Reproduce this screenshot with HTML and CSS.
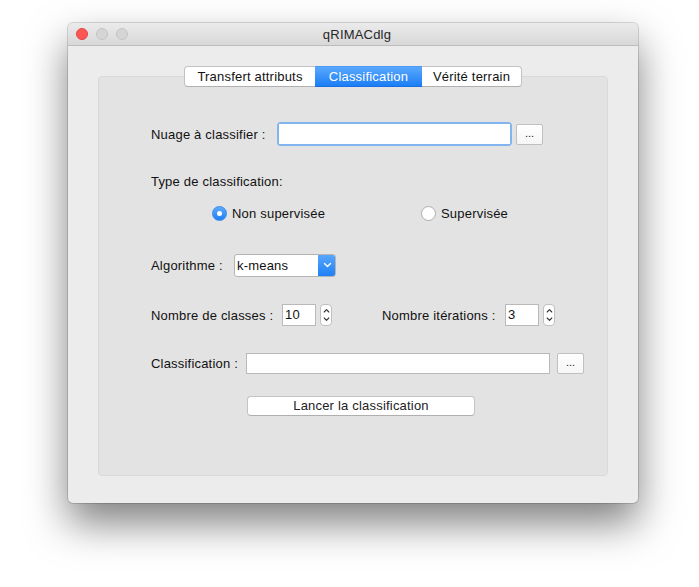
FILE: index.html
```html
<!DOCTYPE html>
<html>
<head>
<meta charset="utf-8">
<link rel="stylesheet" href="styles.css">
</head>
<body>
<div class="window">
  <div class="titlebar">
    <div class="lights">
      <span class="light red"></span>
      <span class="light gray"></span>
      <span class="light gray"></span>
    </div>
    <div class="title">qRIMACdlg</div>
  </div>
  <div class="tabs">
    <div class="tab first">Transfert attributs</div>
    <div class="tab active">Classification</div>
    <div class="tab last">Vérité terrain</div>
  </div>
  <div class="panel">
    <div class="row r1">
      <span class="label w-nuage">Nuage à classifier :</span>
      <div class="focus"><div class="field f-nuage"></div></div>
      <div class="btn dots">...</div>
    </div>
    <div class="row r2">
      <span class="label">Type de classification:</span>
    </div>
    <div class="row r3">
      <div class="radio-item ri1">
        <span class="radio checked"><span class="dot"></span></span>
        <span class="label">Non supervisée</span>
      </div>
      <div class="radio-item ri2">
        <span class="radio"></span>
        <span class="label">Supervisée</span>
      </div>
    </div>
    <div class="row r4">
      <span class="label w-algo">Algorithme :</span>
      <div class="combo">
        <span class="combo-text">k-means</span>
        <span class="combo-btn">
          <svg width="9" height="6" viewBox="0 0 9 6"><path d="M1.5 1.5 L4.5 4.5 L7.5 1.5" fill="none" stroke="#fff" stroke-width="1.4" stroke-linecap="round" stroke-linejoin="round"/></svg>
        </span>
      </div>
    </div>
    <div class="row r5">
      <span class="label w-classes">Nombre de classes :</span>
      <div class="spin-field">10</div>
      <div class="spinner">
        <svg width="9" height="20" viewBox="0 0 9 20"><path d="M2.2 7 L4.5 4.6 L6.8 7" fill="none" stroke="#333" stroke-width="1.1" stroke-linecap="round" stroke-linejoin="round"/><path d="M2.2 13 L4.5 15.4 L6.8 13" fill="none" stroke="#333" stroke-width="1.1" stroke-linecap="round" stroke-linejoin="round"/></svg>
      </div>
      <span class="label w-iter">Nombre itérations :</span>
      <div class="spin-field">3</div>
      <div class="spinner">
        <svg width="9" height="20" viewBox="0 0 9 20"><path d="M2.2 7 L4.5 4.6 L6.8 7" fill="none" stroke="#333" stroke-width="1.1" stroke-linecap="round" stroke-linejoin="round"/><path d="M2.2 13 L4.5 15.4 L6.8 13" fill="none" stroke="#333" stroke-width="1.1" stroke-linecap="round" stroke-linejoin="round"/></svg>
      </div>
    </div>
    <div class="row r6">
      <span class="label w-class">Classification :</span>
      <div class="field f-class"></div>
      <div class="btn dots dots2">...</div>
    </div>
    <div class="row r7">
      <div class="btn launch">Lancer la classification</div>
    </div>
  </div>
</div>
</body>
</html>
```

FILE: styles.css
```css
html, body {
  margin: 0;
  padding: 0;
  background: #ffffff;
}
body {
  width: 699px;
  height: 587px;
  overflow: hidden;
  font-family: "Liberation Sans", Arial, sans-serif;
  font-size: 13px;
  letter-spacing: 0.2px;
  color: #111;
}
.window {
  margin-left: 68px;
  margin-top: 23px;
  width: 570px;
  height: 480px;
  background: #ececec;
  border-radius: 5px;
  box-shadow: 0 0 0 1px rgba(0,0,0,0.14), 0 20px 40px rgba(0,0,0,0.5);
  overflow: hidden;
  display: flex;
  flex-direction: column;
}
.titlebar {
  height: 22px;
  background: linear-gradient(#ebebeb, #d8d8d8);
  border-bottom: 1px solid #bdbdbd;
  display: flex;
  align-items: center;
}
.lights {
  display: flex;
  gap: 8px;
  padding-left: 8px;
}
.light {
  width: 12px;
  height: 12px;
  border-radius: 50%;
  box-sizing: border-box;
}
.light.red {
  background: #fc5753;
  border: 1px solid #df4744;
}
.light.gray {
  background: #d5d5d5;
  border: 1px solid #c4c4c4;
}
.title {
  flex: 1;
  text-align: center;
  margin-left: -52px;
  color: #262626;
  font-size: 13px;
}
.tabs {
  display: flex;
  justify-content: center;
  margin-top: 20px;
  position: relative;
  z-index: 1;
  height: 21px;
}
.tab {
  height: 21px;
  box-sizing: border-box;
  line-height: 19px;
  background: #ffffff;
  border-top: 1px solid #c2c2c2;
  border-bottom: 1px solid #b0b0b0;
  color: #111;
  text-align: center;
}
.tab.first {
  border-left: 1px solid #c2c2c2;
  border-radius: 4px 0 0 4px;
  width: 131px;
}
.tab.last {
  border-right: 1px solid #c2c2c2;
  border-radius: 0 4px 4px 0;
  width: 100px;
}
.tab.active {
  background: linear-gradient(#5aa8fc, #1b7ef6);
  border-top-color: #4b9bf6;
  border-bottom-color: #1a6fe0;
  color: #fff;
  width: 107px;
}
.panel {
  margin: -11px 30px 0 30px;
  height: 400px;
  box-sizing: border-box;
  background: #e3e3e3;
  border: 1px solid #d9d9d9;
  border-radius: 4px;
  padding: 45px 0 0 52px;
  display: flex;
  flex-direction: column;
}
.row {
  display: flex;
  align-items: center;
  height: 24px;
}
.r2 { margin-top: 23px; }
.r3 { margin-top: 8px; }
.r4 { margin-top: 28px; }
.r5 { margin-top: 26px; }
.r6 { margin-top: 24px; }
.r7 { margin-top: 19px; }
.label {
  white-space: nowrap;
  color: #111;
}
.w-nuage { width: 126px; }
.focus {
  width: 235px;
  height: 24px;
  box-sizing: border-box;
  border-radius: 4px;
  background: #82b4ef;
  padding: 2px;
}
.field {
  background: #fff;
  box-sizing: border-box;
  border: 1px solid #b9b9b9;
}
.f-nuage {
  width: 100%;
  height: 100%;
  border: none;
}
.btn {
  background: #fff;
  border: 1px solid #c0c0c0;
  box-sizing: border-box;
  text-align: center;
  color: #222;
}
.dots {
  width: 27px;
  height: 21px;
  margin-left: 4px;
  line-height: 16px;
  font-size: 11px;
  letter-spacing: 0;
  border-radius: 2px;
  background: linear-gradient(#ffffff, #f6f6f6);
}
.dots2 {
  margin-left: 7px;
}
.radio-item {
  display: flex;
  align-items: center;
  gap: 5px;
}
.ri1 {
  margin-left: 61px;
  width: 209px;
}
.radio {
  width: 15px;
  height: 15px;
  box-sizing: border-box;
  border-radius: 50%;
  border: 1px solid #adadad;
  background: #fff;
  display: flex;
  align-items: center;
  justify-content: center;
}
.radio.checked {
  background: linear-gradient(#5fa9fb, #1e7ff5);
  border-color: #3889ee;
}
.dot {
  width: 5px;
  height: 5px;
  border-radius: 50%;
  background: #fff;
}
.w-algo { width: 83px; }
.combo {
  width: 102px;
  height: 23px;
  box-sizing: border-box;
  border: 1px solid #b5b5b5;
  border-radius: 3px;
  background: #fff;
  display: flex;
  overflow: hidden;
}
.combo-text {
  flex: 1;
  line-height: 21px;
  padding-left: 2px;
  color: #111;
}
.combo-btn {
  width: 18px;
  margin: -1px -1px -1px 0;
  background: linear-gradient(#5aa8fc, #1c7ef6);
  border-radius: 0 3px 3px 0;
  display: flex;
  align-items: center;
  justify-content: center;
}
.w-classes { width: 131px; }
.spin-field {
  width: 34px;
  height: 22px;
  box-sizing: border-box;
  border: 1px solid #b9b9b9;
  background: #fff;
  line-height: 20px;
  padding-left: 2px;
  color: #111;
}
.spinner {
  width: 12px;
  height: 22px;
  box-sizing: border-box;
  margin-left: 4px;
  border: 1px solid #c0c0c0;
  border-radius: 4px;
  background: #fff;
  display: flex;
  align-items: center;
  justify-content: center;
}
.w-iter {
  margin-left: 50px;
  width: 123px;
}
.w-class { width: 95px; }
.f-class {
  width: 304px;
  height: 21px;
}
.launch {
  margin-left: 96px;
  width: 228px;
  height: 20px;
  line-height: 18px;
  border-radius: 4px;
  border-color: #c4c4c4;
  border-bottom-color: #afafaf;
}
```
